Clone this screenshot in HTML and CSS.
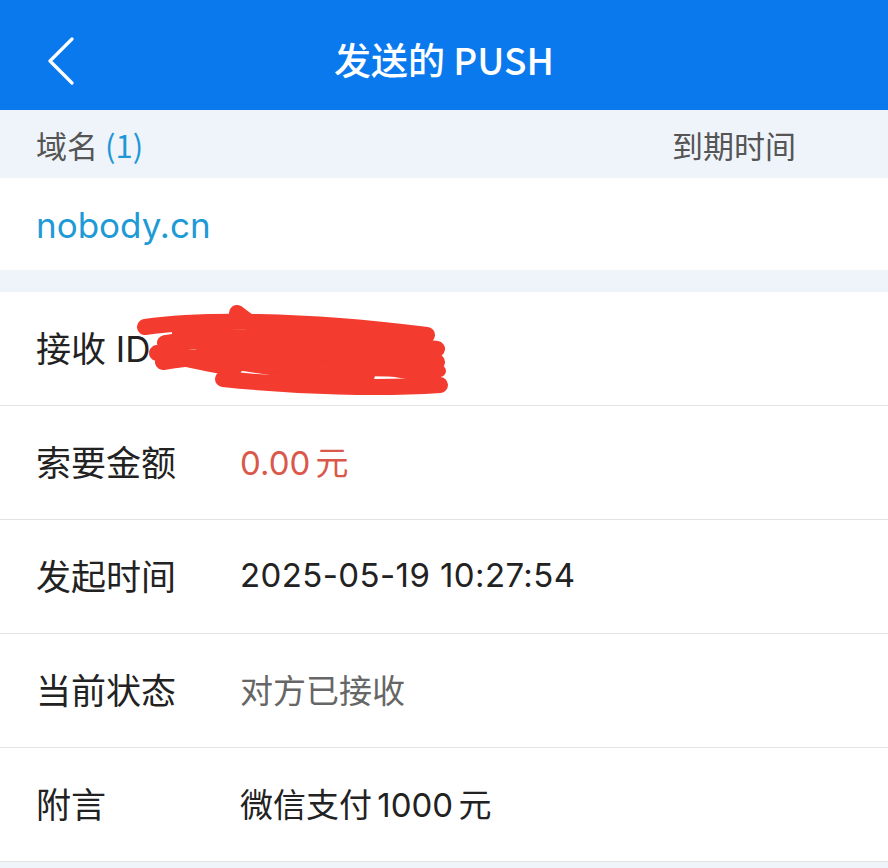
FILE: index.html
```html
<!DOCTYPE html>
<html lang="zh">
<head>
<meta charset="utf-8">
<title>发送的PUSH</title>
<link rel="stylesheet" href="styles.css">
</head>
<body>
<div class="page">
  <header class="nav">
    <span class="back">
      <svg width="30" height="48" viewBox="0 0 30 48"><path d="M26 2 L4 24 L26 46" fill="none" stroke="#fff" stroke-width="3.2" stroke-linecap="round" stroke-linejoin="round"/></svg>
    </span>
    <h1 class="title">发送的 PUSH</h1>
  </header>
  <div class="colhead">
    <span class="colhead-left">域名 <span class="count">(1)</span></span>
    <span class="colhead-right">到期时间</span>
  </div>
  <div class="domain-row">
    <span class="domain">nobody.cn</span>
  </div>
  <div class="gap"></div>
  <div class="details">
    <div class="row">
      <span class="label">接收 ID</span>
      <span class="value"></span>
      <svg class="scribble" width="320" height="95" viewBox="0 0 320 95">
        <g fill="none" stroke="#f43b30" stroke-linecap="round" stroke-linejoin="round">
          <g stroke-width="16">
            <path d="M10,22 C65,14 165,14 292,30"/>
            <path d="M102,8 L118,20"/>
            <path d="M30,38 C65,31 105,47 125,45 C185,40 245,36 302,44"/>
            <path d="M28,57 C85,47 195,47 302,57"/>
            <path d="M88,74 C165,82 245,84 305,80"/>
            <path d="M45,28 C125,35 215,40 290,38"/>
            <path d="M22,48 C60,55 80,62 100,62"/>
          </g>
          <g stroke-width="20">
            <path d="M120,30 C160,40 200,50 250,52"/>
            <path d="M70,50 C120,58 170,66 230,70"/>
            <path d="M150,28 C190,32 230,40 280,46"/>
          </g>
          <g stroke-width="12">
            <path d="M36,46 C95,62 195,66 305,66"/>
            <path d="M230,60 C260,66 280,70 300,72"/>
          </g>
        </g>
      </svg>
    </div>
    <div class="row">
      <span class="label">索要金额</span>
      <span class="value amount">0.00 元</span>
    </div>
    <div class="row">
      <span class="label">发起时间</span>
      <span class="value date">2025-05-19 10:27:54</span>
    </div>
    <div class="row">
      <span class="label">当前状态</span>
      <span class="value muted">对方已接收</span>
    </div>
    <div class="row">
      <span class="label">附言</span>
      <span class="value">微信支付 1000 元</span>
    </div>
  </div>
</div>
</body>
</html>
```

FILE: styles.css
```css
html, body {
  margin: 0;
  padding: 0;
  background: #eff4fb;
}
body {
  font-family: Inter, "Noto Sans CJK SC", "Noto Sans", sans-serif;
  width: 888px;
  height: 868px;
  overflow: hidden;
}
.page {
  display: flex;
  flex-direction: column;
}
.nav {
  height: 110px;
  background: #0a79ee;
  display: flex;
  align-items: center;
  justify-content: center;
  position: relative;
}
.back {
  position: absolute;
  left: 46px;
  top: 37px;
  display: block;
  width: 30px;
  height: 48px;
}
.back svg { display: block; }
.title {
  margin: 0;
  color: #fff;
  font-family: "Noto Sans CJK SC", sans-serif;
  font-size: 37px;
  font-weight: 500;
  padding-top: 8px;
}
.colhead {
  height: 68px;
  background: #eff4fb;
  display: flex;
  align-items: center;
  justify-content: space-between;
  padding: 0 92px 0 36px;
  font-family: "Noto Sans CJK SC", sans-serif;
  font-size: 31px;
  color: #555;
}
.count {
  color: #1f97d6;
}
.domain-row {
  height: 92px;
  background: #fff;
  display: flex;
  align-items: center;
  padding-left: 36px;
}
.domain {
  font-size: 35px;
  color: #1e9ad6;
  padding-top: 2px;
}
.gap {
  height: 22px;
  background: #eff4fb;
}
.details {
  background: #fff;
}
.row {
  height: 113px;
  border-bottom: 1px solid #e3e3e3;
  display: flex;
  align-items: center;
  padding-left: 36px;
  position: relative;
}
.label {
  width: 204px;
  font-size: 35px;
  color: #222;
  padding-bottom: 4px;
}
.value {
  font-size: 33px;
  color: #222;
  padding-bottom: 4px;
  word-spacing: -4px;
}
.date {
  letter-spacing: 0.4px;
  word-spacing: 0;
}
.amount {
  color: #d9584a;
}
.muted {
  color: #666;
}
.scribble {
  position: absolute;
  left: 135px;
  top: 13px;
}
```
